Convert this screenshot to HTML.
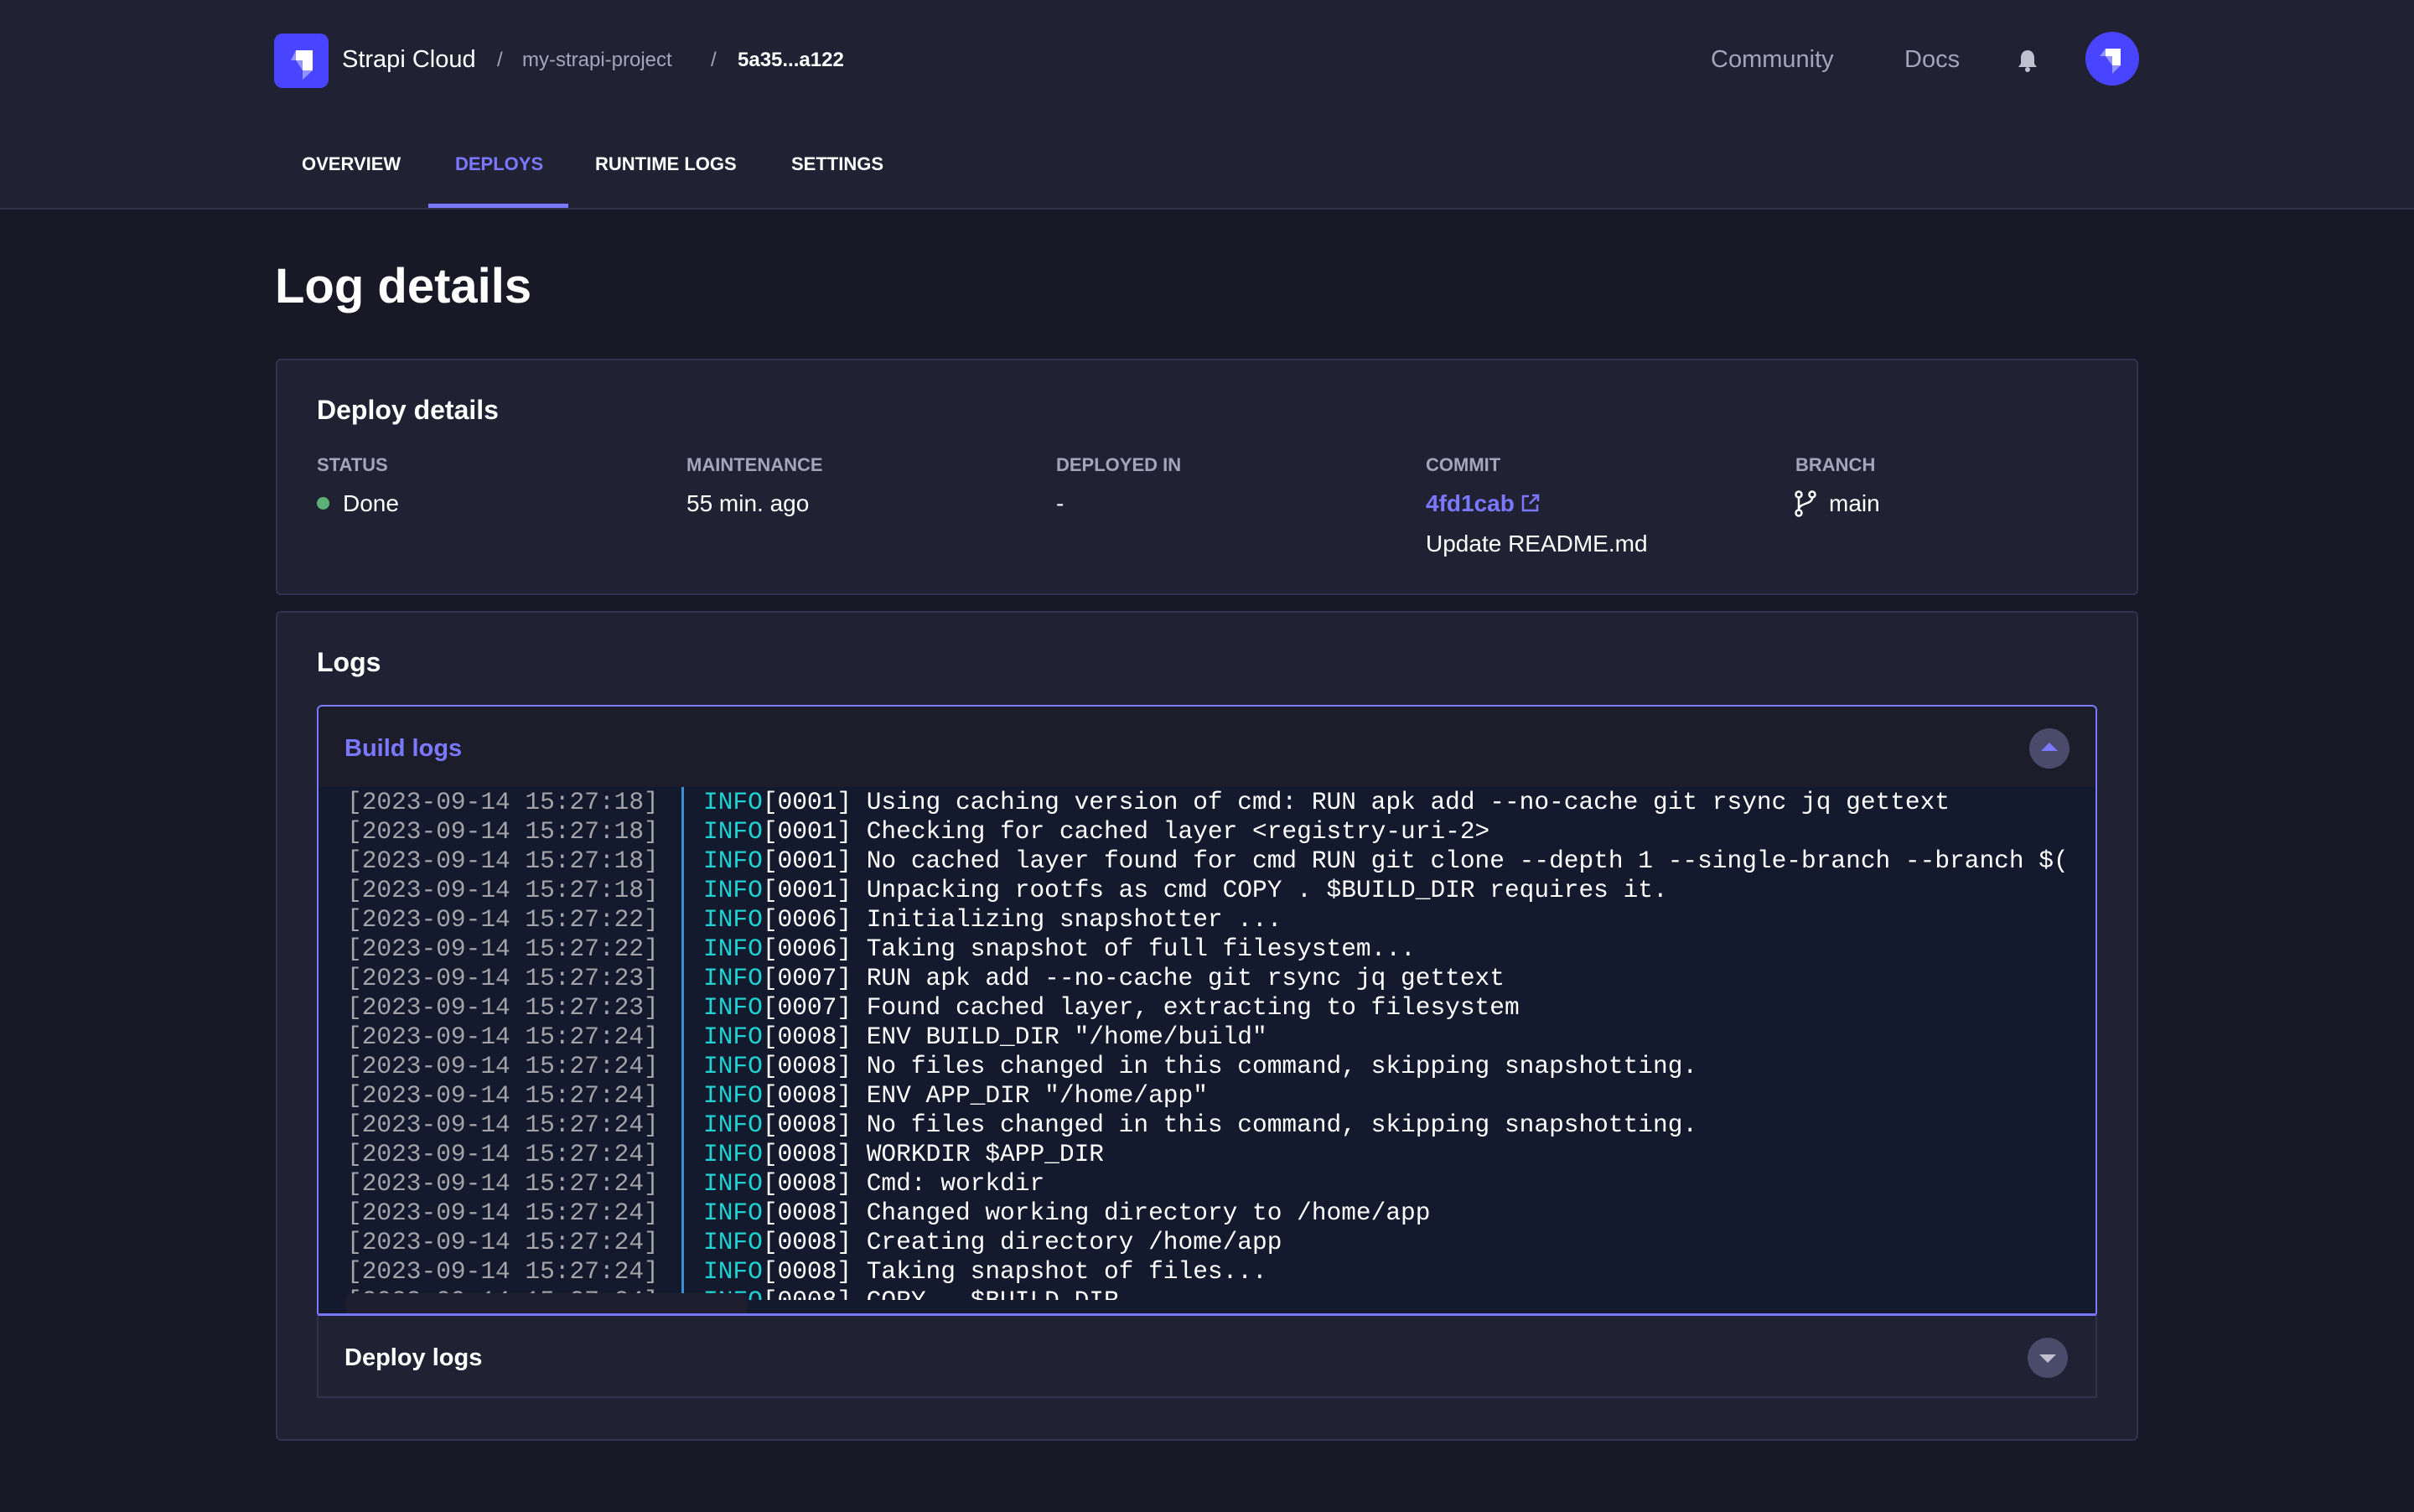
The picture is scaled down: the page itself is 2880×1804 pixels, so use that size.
<!DOCTYPE html>
<html><head><meta charset="utf-8"><style>
*{margin:0;padding:0;box-sizing:border-box}
body{width:2880px;height:1804px;background:#181826;font-family:"Liberation Sans",sans-serif;color:#fff;position:relative;overflow:hidden}
.abs{position:absolute}
.hdr{left:0;top:0;width:2880px;height:250px;background:#212134;border-bottom:2px solid #32324d}
.t{white-space:nowrap;line-height:1}
.card{background:#212134;border:2px solid #32324d;border-radius:6px}
.lbl{font-size:22px;font-weight:bold;color:#a5a5ba;top:544px}
.val{font-size:28px;top:587px}
.log{font-family:"Liberation Mono",monospace;font-size:29.5px;line-height:35px;white-space:pre}
.ts{color:#a3a3a8}
.in{color:#20d3d3}
</style></head><body>
<div class="abs hdr"></div>
<div class="abs" style="left:327px;top:40px;width:65px;height:65px;background:#4945ff;border-radius:10px"></div>
<svg class="abs" style="left:327px;top:40px" width="65" height="65" viewBox="0 0 65 65"><path d="M26 20h20v24h-12V32H26z" fill="#fff"/><path d="M26 32h8v12z" fill="#9593ff"/><path d="M26 20v12h-6z" fill="#9593ff"/><path d="M34 44h12l-12 11z" fill="#9593ff"/></svg>
<div class="abs t" style="left:408px;top:57px;font-size:29px">Strapi Cloud</div>
<div class="abs t" style="left:593px;top:60px;font-size:24px;color:#a5a5ba">/</div>
<div class="abs t" style="left:623px;top:60px;font-size:24px;color:#a5a5ba">my-strapi-project</div>
<div class="abs t" style="left:848px;top:60px;font-size:24px;color:#a5a5ba">/</div>
<div class="abs t" style="left:880px;top:60px;font-size:24px;font-weight:bold">5a35...a122</div>
<div class="abs t" style="left:2041px;top:57px;font-size:29px;color:#a5a5ba">Community</div>
<div class="abs t" style="left:2272px;top:57px;font-size:29px;color:#a5a5ba">Docs</div>
<svg class="abs" style="left:2406px;top:58px" width="26" height="28" viewBox="0 0 26 28"><path d="M13 2c-5 0-8 4-8 9v7l-3 4h22l-3-4v-7c0-5-3-9-8-9z" fill="#c0c0cf"/><circle cx="13" cy="25" r="3" fill="#c0c0cf"/></svg>
<div class="abs" style="left:2488px;top:38px;width:64px;height:64px;border-radius:50%;background:#4945ff"></div>
<svg class="abs" style="left:2488px;top:38px" width="64" height="64" viewBox="0 0 64 64"><path d="M24 20h18v20h-10V29h-8z" fill="#fff"/><path d="M24 20v9h-7z" fill="#9593ff"/><path d="M24 29h8v11z" fill="#9593ff"/><path d="M32 40h10l-10 10z" fill="#9593ff"/></svg>
<div class="abs t" style="left:360px;top:185px;font-size:22px;font-weight:bold">OVERVIEW</div>
<div class="abs t" style="left:543px;top:185px;font-size:22px;font-weight:bold;color:#7b79ff">DEPLOYS</div>
<div class="abs t" style="left:710px;top:185px;font-size:22px;font-weight:bold">RUNTIME LOGS</div>
<div class="abs t" style="left:944px;top:185px;font-size:22px;font-weight:bold">SETTINGS</div>
<div class="abs" style="left:511px;top:243px;width:167px;height:5px;background:#7b79ff"></div>

<div class="abs t" style="left:328px;top:313px;font-size:58px;font-weight:bold">Log details</div>

<div class="abs card" style="left:329px;top:428px;width:2222px;height:282px"></div>
<div class="abs t" style="left:378px;top:473px;font-size:32px;font-weight:bold">Deploy details</div>
<div class="abs t lbl" style="left:378px">STATUS</div>
<div class="abs t lbl" style="left:819px">MAINTENANCE</div>
<div class="abs t lbl" style="left:1260px">DEPLOYED IN</div>
<div class="abs t lbl" style="left:1701px">COMMIT</div>
<div class="abs t lbl" style="left:2142px">BRANCH</div>
<div class="abs" style="left:378px;top:593px;width:15px;height:15px;border-radius:50%;background:#5cb176"></div>
<div class="abs t val" style="left:409px">Done</div>
<div class="abs t val" style="left:819px">55 min. ago</div>
<div class="abs t val" style="left:1260px">-</div>
<div class="abs t val" style="left:1701px;color:#7b79ff;font-weight:bold">4fd1cab</div>
<svg class="abs" style="left:1814px;top:588px" width="24" height="24" viewBox="0 0 24 24" fill="none" stroke="#7b79ff" stroke-width="2.5"><path d="M10 4H3v17h17v-7M14 3h7v7M21 3L11 13"/></svg>
<div class="abs t val" style="left:1701px;top:635px">Update README.md</div>
<svg class="abs" style="left:2140px;top:584px" width="30" height="34" viewBox="0 0 30 34" fill="none" stroke="#fff" stroke-width="2.5"><circle cx="6" cy="6" r="3.5"/><circle cx="6" cy="28" r="3.5"/><circle cx="22" cy="6" r="3.5"/><path d="M6 10v14M22 10c0 8-16 6-16 14"/></svg>
<div class="abs t val" style="left:2182px">main</div>

<div class="abs card" style="left:329px;top:729px;width:2222px;height:990px"></div>
<div class="abs t" style="left:378px;top:774px;font-size:32px;font-weight:bold">Logs</div>
<div class="abs" style="left:378px;top:841px;width:2124px;height:730px;border:2px solid #7b79ff;border-radius:6px 6px 0 0;background:#1c1c2b;overflow:hidden">
 <div class="abs" style="left:0;top:96px;width:2120px;height:632px;background:#131a2e;overflow:hidden">
  <div class="abs" style="left:433px;top:0;width:3px;height:632px;background:#3d8fd6"></div>
  <div class="abs log ts" style="left:34px;top:1px">[2023-09-14 15:27:18]
[2023-09-14 15:27:18]
[2023-09-14 15:27:18]
[2023-09-14 15:27:18]
[2023-09-14 15:27:22]
[2023-09-14 15:27:22]
[2023-09-14 15:27:23]
[2023-09-14 15:27:23]
[2023-09-14 15:27:24]
[2023-09-14 15:27:24]
[2023-09-14 15:27:24]
[2023-09-14 15:27:24]
[2023-09-14 15:27:24]
[2023-09-14 15:27:24]
[2023-09-14 15:27:24]
[2023-09-14 15:27:24]
[2023-09-14 15:27:24]
[2023-09-14 15:27:24]</div>
  <div class="abs log" style="left:459px;top:1px;width:1640px;overflow:hidden"><span class="in">INFO</span>[0001] Using caching version of cmd: RUN apk add --no-cache git rsync jq gettext
<span class="in">INFO</span>[0001] Checking for cached layer &lt;registry-uri-2&gt;
<span class="in">INFO</span>[0001] No cached layer found for cmd RUN git clone --depth 1 --single-branch --branch $(
<span class="in">INFO</span>[0001] Unpacking rootfs as cmd COPY . $BUILD_DIR requires it.
<span class="in">INFO</span>[0006] Initializing snapshotter ...
<span class="in">INFO</span>[0006] Taking snapshot of full filesystem...
<span class="in">INFO</span>[0007] RUN apk add --no-cache git rsync jq gettext
<span class="in">INFO</span>[0007] Found cached layer, extracting to filesystem
<span class="in">INFO</span>[0008] ENV BUILD_DIR "/home/build"
<span class="in">INFO</span>[0008] No files changed in this command, skipping snapshotting.
<span class="in">INFO</span>[0008] ENV APP_DIR "/home/app"
<span class="in">INFO</span>[0008] No files changed in this command, skipping snapshotting.
<span class="in">INFO</span>[0008] WORKDIR $APP_DIR
<span class="in">INFO</span>[0008] Cmd: workdir
<span class="in">INFO</span>[0008] Changed working directory to /home/app
<span class="in">INFO</span>[0008] Creating directory /home/app
<span class="in">INFO</span>[0008] Taking snapshot of files...
<span class="in">INFO</span>[0008] COPY . $BUILD_DIR</div>
  <div class="abs" style="left:0;top:612px;width:2120px;height:24px;background:#131a2e"></div>
  <div class="abs" style="left:32px;top:604px;width:480px;height:28px;background:#1e1e2e;border-radius:10px"></div>
 </div>
 <div class="abs t" style="left:31px;top:36px;font-size:29px;font-weight:bold;color:#7b79ff">Build logs</div>
 <div class="abs" style="left:2041px;top:26px;width:48px;height:48px;border-radius:50%;background:#4a4a6a"></div>
 <div class="abs" style="left:2055px;top:43px;width:0;height:0;border-left:10px solid transparent;border-right:10px solid transparent;border-bottom:10px solid #7b79ff"></div>
</div>
<div class="abs" style="left:378px;top:1567px;width:2124px;height:101px;background:#212134;border:2px solid #32324d;border-top:3px solid #7b79ff"></div>
<div class="abs t" style="left:411px;top:1606px;font-size:29px;font-weight:bold">Deploy logs</div>
<div class="abs" style="left:2419px;top:1596px;width:48px;height:48px;border-radius:50%;background:#4a4a6a"></div>
<div class="abs" style="left:2433px;top:1616px;width:0;height:0;border-left:10px solid transparent;border-right:10px solid transparent;border-top:10px solid #c0c0cf"></div>
</body></html>
